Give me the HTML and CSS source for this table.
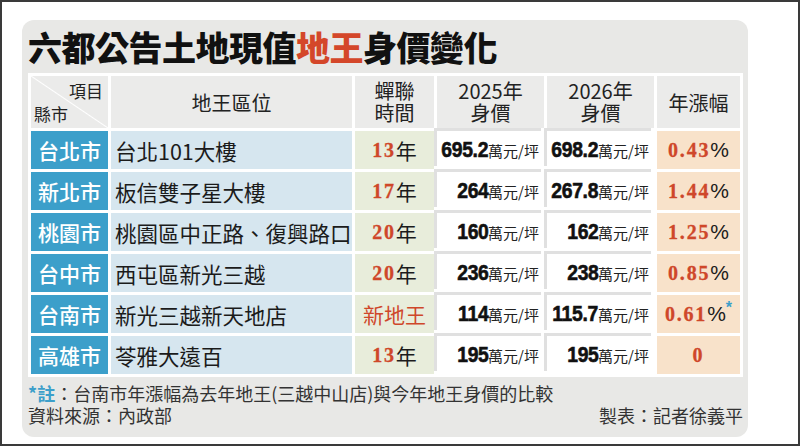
FILE: index.html
```html
<!DOCTYPE html>
<html lang="zh-Hant">
<head>
<meta charset="utf-8">
<title>六都公告土地現值地王身價變化</title>
<link rel="stylesheet" href="styles.css">
</head>
<body>
<div class="frame">
  <div class="card">
    <h1 class="title">六都公告土地現值<span class="hl">地王</span>身價變化</h1>
    <div class="table">
      <div class="th corner"><span class="c-item">項目</span><span class="c-city">縣市</span></div>
      <div class="th">地王區位</div>
      <div class="th two"><span>蟬聯</span><span>時間</span></div>
      <div class="th two"><span>2025年</span><span>身價</span></div>
      <div class="th two"><span>2026年</span><span>身價</span></div>
      <div class="th">年漲幅</div>

      <div class="td city">台北市</div>
      <div class="td loc">台北101大樓</div>
      <div class="td yr"><span class="r">13</span>年</div>
      <div class="td price"><span class="num">695.2</span><span class="unit">萬元/坪</span></div>
      <div class="td price"><span class="num">698.2</span><span class="unit">萬元/坪</span></div>
      <div class="td pct"><span class="r">0.43</span><span class="pc">%</span></div>

      <div class="td city">新北市</div>
      <div class="td loc">板信雙子星大樓</div>
      <div class="td yr"><span class="r">17</span>年</div>
      <div class="td price"><span class="num">264</span><span class="unit">萬元/坪</span></div>
      <div class="td price"><span class="num">267.8</span><span class="unit">萬元/坪</span></div>
      <div class="td pct"><span class="r">1.44</span><span class="pc">%</span></div>

      <div class="td city">桃園市</div>
      <div class="td loc">桃園區中正路、復興路口</div>
      <div class="td yr"><span class="r">20</span>年</div>
      <div class="td price"><span class="num">160</span><span class="unit">萬元/坪</span></div>
      <div class="td price"><span class="num">162</span><span class="unit">萬元/坪</span></div>
      <div class="td pct"><span class="r">1.25</span><span class="pc">%</span></div>

      <div class="td city">台中市</div>
      <div class="td loc">西屯區新光三越</div>
      <div class="td yr"><span class="r">20</span>年</div>
      <div class="td price"><span class="num">236</span><span class="unit">萬元/坪</span></div>
      <div class="td price"><span class="num">238</span><span class="unit">萬元/坪</span></div>
      <div class="td pct"><span class="r">0.85</span><span class="pc">%</span></div>

      <div class="td city">台南市</div>
      <div class="td loc">新光三越新天地店</div>
      <div class="td yr"><span class="new">新地王</span></div>
      <div class="td price"><span class="num">114</span><span class="unit">萬元/坪</span></div>
      <div class="td price"><span class="num">115.7</span><span class="unit">萬元/坪</span></div>
      <div class="td pct"><span class="r">0.61</span><span class="pc">%</span><span class="ast">*</span></div>

      <div class="td city">高雄市</div>
      <div class="td loc">苓雅大遠百</div>
      <div class="td yr"><span class="r">13</span>年</div>
      <div class="td price"><span class="num">195</span><span class="unit">萬元/坪</span></div>
      <div class="td price"><span class="num">195</span><span class="unit">萬元/坪</span></div>
      <div class="td pct"><span class="r">0</span></div>
    </div>
    <div class="notes">
      <p class="note"><span class="mark">*註</span>：台南市年漲幅為去年地王(三越中山店)與今年地王身價的比較</p>
      <div class="src"><span>資料來源：內政部</span><span>製表：記者徐義平</span></div>
    </div>
  </div>
</div>
</body>
</html>
```
FILE: styles.css
```css
html, body {
  margin: 0;
  padding: 0;
  background: #fff;
}

.frame {
  width: 800px;
  height: 446px;
  box-sizing: border-box;
  border: 2px solid #3a3a3a;
  background: #fff;
  padding: 18px 0 0 20px;
  font-family: "Noto Sans CJK TC", "Liberation Sans", sans-serif;
}

.card {
  width: 726px;
  height: 417px;
  box-sizing: border-box;
  background: #e8e8e6;
  border-radius: 12px;
  padding: 10px 5px 0 6px;
}

.title {
  margin: 0 0 9px;
  font-family: "Noto Sans CJK TC", sans-serif;
  font-weight: 900;
  font-size: 34px;
  line-height: 34px;
  letter-spacing: -0.5px;
  color: #111;
}

.title .hl {
  color: #d4472a;
}

.table {
  display: grid;
  grid-template-columns: 77px 241px 79px 107px 107px 83px;
  grid-template-rows: 52px repeat(6, 38px);
  gap: 3px;
  padding: 3px;
  background: #fff;
  width: max-content;
}

.th {
  background: #ebebea;
  display: flex;
  align-items: center;
  justify-content: center;
  text-align: center;
  font-size: 20px;
  line-height: 23px;
  color: #222;
}

.two {
  flex-direction: column;
  gap: 0;
}

.two span {
  display: block;
  height: 22px;
  line-height: 22px;
}

.corner {
  flex-direction: column;
  justify-content: space-between;
  align-items: stretch;
  padding: 5px 5px 5px 3px;
  font-size: 17px;
  line-height: 19px;
  background:
    linear-gradient(to top right, transparent calc(50% - 1px), #fff 50%, transparent calc(50% + 1px)),
    #ebebea;
}

.c-item {
  align-self: flex-end;
}

.c-city {
  align-self: flex-start;
}

.td {
  display: flex;
  align-items: center;
  font-size: 21px;
  color: #1b1b1b;
  white-space: nowrap;
}

.city {
  background: #3c9fca;
  color: #fff;
  font-weight: 500;
  justify-content: center;
}

.loc {
  background: #d6e6ef;
  padding-left: 4px;
  font-size: 21.5px;
}

.yr {
  background: #e8eddb;
  justify-content: center;
}

.price {
  background: #fff;
  justify-content: flex-end;
  padding-right: 5px;
  box-shadow: -3px -3px 0 #e0e0e0;
}

.pct {
  background: #f8e2ca;
  justify-content: center;
}

.r {
  font-family: "Liberation Serif", serif;
  font-weight: 700;
  font-size: 20px;
  letter-spacing: 1.8px;
  color: #cf472a;
  -webkit-text-stroke: 0.3px #cf472a;
}

.pc {
  font-family: "Liberation Sans", sans-serif;
  font-size: 21px;
  color: #1b1b1b;
}

.ast {
  align-self: flex-start;
  margin-top: 4px;
  font-family: "Liberation Sans", sans-serif;
  font-weight: 700;
  font-size: 16px;
  color: #3c9fca;
}

.new {
  color: #cf472a;
}

.num {
  display: inline-block;
  font-family: "Liberation Sans", sans-serif;
  font-weight: 700;
  font-size: 22px;
  letter-spacing: -0.4px;
  color: #111;
  -webkit-text-stroke: 0.6px #111;
  transform: scaleX(0.88);
  transform-origin: right center;
  margin-left: -6px;
}

.unit {
  font-size: 15px;
  color: #222;
}

.notes {
  margin-top: 6px;
  font-size: 18px;
  line-height: 20px;
  color: #333;
}

.note {
  margin: 0;
}

.mark {
  color: #3c9fca;
  font-weight: 700;
}

.src {
  display: flex;
  justify-content: space-between;
  margin-top: 2px;
}
```
